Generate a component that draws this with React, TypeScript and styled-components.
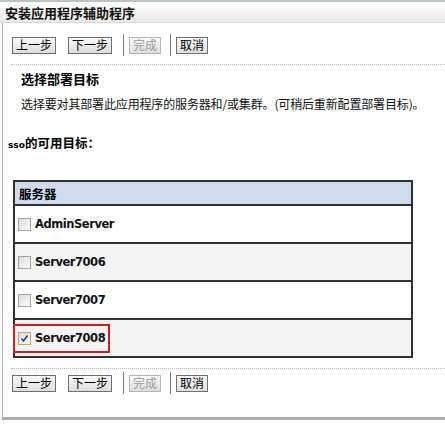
import React from "react";
import styled, { createGlobalStyle } from "styled-components";

const Global = createGlobalStyle`
  html, body { margin: 0; padding: 0; background: #fff; }
  body { font-family: "Noto Sans CJK SC", "DejaVu Sans", sans-serif; color: #000; }
`;

const Panel = styled.div`
  margin-left: 2px;
  width: 443px;
  height: 420px;
  box-sizing: border-box;
  border-left: 1px solid #b4b4b4;
  border-bottom: 3px solid #a9adad;
  display: flex;
  flex-direction: column;
`;

const TitleBar = styled.div`
  height: 23px;
  box-sizing: border-box;
  margin-left: -3px;
  padding-left: 5px;
  border-top: 2px solid #bcc3c3;
  border-bottom: 1px solid #d9d9d9;
  background: linear-gradient(#fdfdfd, #e9e9e9);
  display: flex;
  align-items: center;
  font-size: 13px;
  font-weight: bold;
  color: #111;
`;

const Toolbar = styled.div<{ $top: number }>`
  display: flex;
  align-items: center;
  height: 22px;
  margin-top: ${(p) => p.$top}px;
  padding-left: 9px;
`;

const Btn = styled.button<{ $gap?: number }>`
  height: 17px;
  box-sizing: border-box;
  padding: 0 3px;
  margin-right: ${(p) => p.$gap ?? 0}px;
  border: 1px solid #6f6f6f;
  background: linear-gradient(#fafafa, #dedede);
  font-family: "Noto Sans CJK SC", sans-serif;
  font-size: 12px;
  line-height: 14px;
  color: ${(p) => (p.disabled ? "#9a9a9a" : "#000")};
  border-color: ${(p) => (p.disabled ? "#b5b5b5" : "#6f6f6f")};
  display: flex;
  align-items: center;
`;

const Sep = styled.span`
  width: 1px;
  height: 22px;
  background: #7d7d7d;
  margin: 0 5px 0 0;
`;

const Dotted = styled.div<{ $top: number }>`
  margin-top: ${(p) => p.$top}px;
  margin-left: 8px;
  border-top: 1px dotted #b9b9b9;
`;

const Heading = styled.div`
  margin: 6px 0 0 18px;
  font-size: 13px;
  line-height: 16px;
  font-weight: bold;
`;

const Desc = styled.div`
  margin: 9px 0 0 18px;
  font-size: 12px;
  line-height: 16px;
  letter-spacing: -0.15px;
  color: #111;
  white-space: nowrap;
`;

const Label = styled.div`
  margin: 23px 0 0 5px;
  font-size: 12.5px;
  line-height: 16px;
  font-weight: bold;
  span {
    font-family: "DejaVu Sans", sans-serif;
    font-size: 9px;
  }
`;

const Table = styled.table`
  margin: 27px 0 0 10px;
  width: 400px;
  border-collapse: collapse;
  border: 2px solid #303030;
`;

const Th = styled.th`
  height: 22px;
  background: #cfdcee;
  border-bottom: 2px solid #303030;
  text-align: left;
  padding: 0 0 0 4px;
  font-size: 12.5px;
  font-weight: bold;
`;

const Td = styled.td<{ $alt: boolean }>`
  height: 36px;
  background: ${(p) => (p.$alt ? "#f4f4f4" : "#fff")};
  border-bottom: 2px solid #303030;
  padding: 0 0 0 2px;
`;

const Cell = styled.div<{ $hl: boolean }>`
  display: inline-flex;
  align-items: center;
  height: 25px;
  padding: 0 3px 0 3px;
  border: 2px solid ${(p) => (p.$hl ? "#cc1f1f" : "transparent")};
  margin-left: -4px;
`;

const Box = styled.span<{ $on: boolean }>`
  width: 11px;
  height: 11px;
  border: 1px solid ${(p) => (p.$on ? "#d4a35a" : "#a6a6a6")};
  background: linear-gradient(135deg, #dcdcdc, #fbfbfb);
  margin-right: 4px;
  display: flex;
  align-items: center;
  justify-content: center;
`;

const Name = styled.span`
  font-family: "DejaVu Sans", sans-serif;
  font-size: 11.5px;
  letter-spacing: -0.45px;
  font-weight: bold;
  color: #111;
`;

const Buttons = ({ top }: { top: number }) => (
  <Toolbar $top={top}>
    <Btn $gap={12}>上一步</Btn>
    <Btn $gap={11}>下一步</Btn>
    <Sep />
    <Btn disabled $gap={9}>完成</Btn>
    <Sep />
    <Btn>取消</Btn>
  </Toolbar>
);

const servers = ["AdminServer", "Server7006", "Server7007", "Server7008"];

export default function App() {
  return (
    <>
      <Global />
      <Panel>
        <TitleBar>安装应用程序辅助程序</TitleBar>
        <Buttons top={11} />
        <Dotted $top={8} />
        <Heading>选择部署目标</Heading>
        <Desc>选择要对其部署此应用程序的服务器和/或集群。(可稍后重新配置部署目标)。</Desc>
        <Label>
          <span>sso</span>的可用目标：
        </Label>
        <Table>
          <thead>
            <tr>
              <Th>服务器</Th>
            </tr>
          </thead>
          <tbody>
            {servers.map((s, i) => {
              const on = i === 3;
              return (
                <tr key={s}>
                  <Td $alt={i % 2 === 1}>
                    <Cell $hl={on}>
                      <Box $on={on}>
                        {on && (
                          <svg width="9" height="9" viewBox="0 0 9 9">
                            <path d="M1.5 4.5 L3.5 7 L7.5 1.5" fill="none" stroke="#2a3f9c" strokeWidth="1.6" />
                          </svg>
                        )}
                      </Box>
                      <Name>{s}</Name>
                    </Cell>
                  </Td>
                </tr>
              );
            })}
          </tbody>
        </Table>
        <Dotted $top={10} />
        <Buttons top={3} />
      </Panel>
    </>
  );
}
